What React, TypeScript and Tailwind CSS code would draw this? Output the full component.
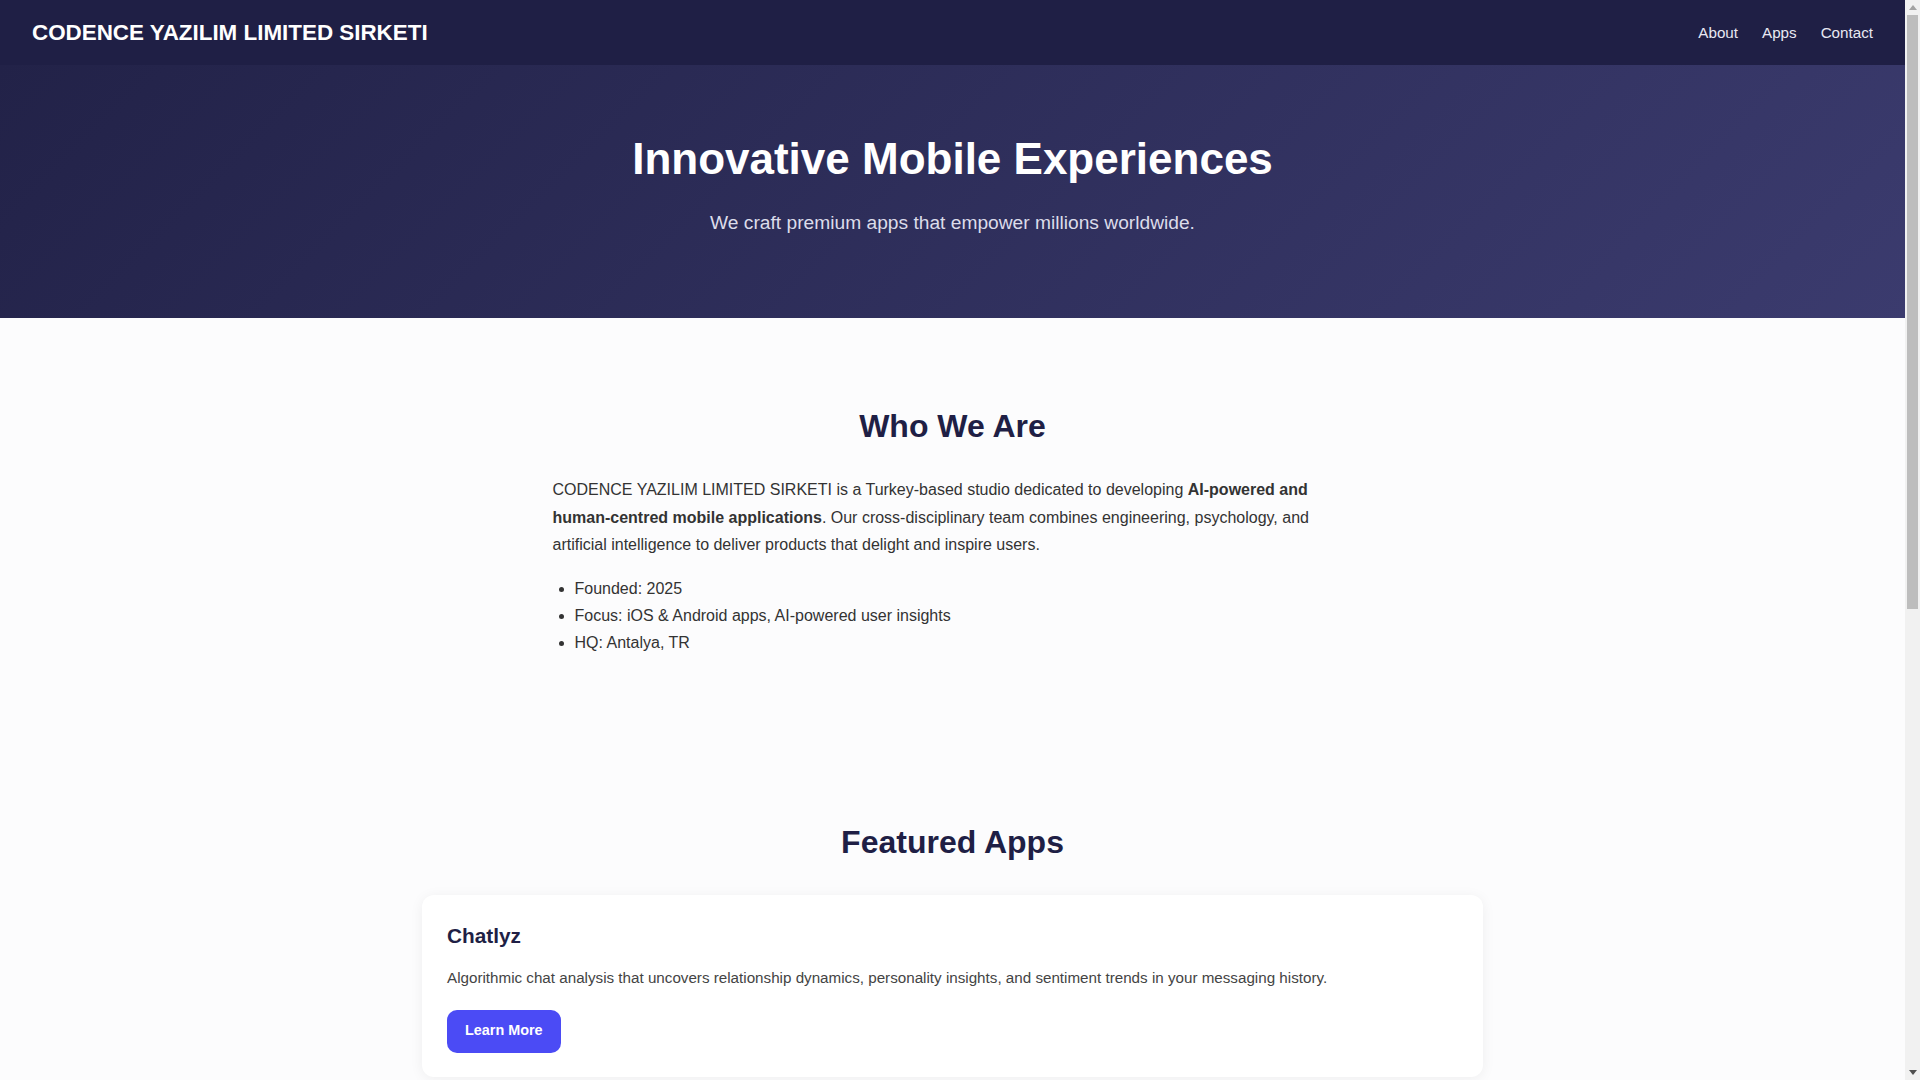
import React from "react";

function FakeScrollbar() {
  return (
    <div className="sticky top-0 h-screen w-[15px] shrink-0 bg-[#f1f1f1] flex flex-col items-center">
      <div className="h-[15px] w-full flex items-center justify-center">
        <svg width="8" height="5" viewBox="0 0 8 5"><path d="M0 5 L4 0 L8 5 Z" fill="#a3a3a3" /></svg>
      </div>
      <div className="w-[11px] h-[594px] bg-[#bdbdbd]" />
      <div className="flex-1" />
      <div className="h-[15px] w-full flex items-center justify-center">
        <svg width="8" height="5" viewBox="0 0 8 5"><path d="M0 0 L8 0 L4 5 Z" fill="#505050" /></svg>
      </div>
    </div>
  );
}

export default function App() {
  return (
    <div className="flex items-start bg-[#fcfcfd] text-[#333333] font-['Liberation_Sans',Arial,sans-serif]">
      <div className="flex-1 min-w-0">
        <header className="h-[65px] bg-[#1f1f45] px-8 pt-[2px] flex items-center justify-between">
          <div className="text-white font-bold text-[22.4px] leading-none">CODENCE YAZILIM LIMITED SIRKETI</div>
          <nav className="flex items-center gap-[24px] text-[15.2px] text-[#e8e8f2]">
            <a href="#about">About</a>
            <a href="#apps">Apps</a>
            <a href="#contact">Contact</a>
          </nav>
        </header>

        <section className="bg-[linear-gradient(135deg,#222248_0%,#3b3b6e_100%)] pt-[68px] pb-[79px] text-center">
          <h1 className="text-white font-bold text-[44px] leading-[52.8px] mb-[22.4px]">Innovative Mobile Experiences</h1>
          <p className="text-[#dcdcea] text-[19.2px] leading-[30.72px]">We craft premium apps that empower millions worldwide.</p>
        </section>

        <section id="about" className="pt-[89px] pb-[80px]">
          <div className="max-w-[800px] mx-auto">
            <h2 className="text-center text-[#1f1f45] font-bold text-[32px] leading-[38.4px] mb-[31px]">Who We Are</h2>
            <p className="text-[16px] leading-[27.5px]">
              CODENCE YAZILIM LIMITED SIRKETI is a Turkey-based studio dedicated to developing{" "}
              <strong className="font-bold">AI-powered and human-centred mobile applications</strong>. Our cross-disciplinary team
              combines engineering, psychology, and artificial intelligence to deliver products that delight and inspire users.
            </p>
            <ul className="mt-[16px] pl-[22px] list-disc text-[16px] leading-[27px]">
              <li>Founded: 2025</li>
              <li>Focus: iOS &amp; Android apps, AI-powered user insights</li>
              <li>HQ: Antalya, TR</li>
            </ul>
          </div>
        </section>

        <section id="apps" className="pt-[87.5px] pb-[80px]">
          <div className="max-w-[1061px] mx-auto">
            <h2 className="text-center text-[#1f1f45] font-bold text-[32px] leading-[38.4px] mb-[33.3px]">Featured Apps</h2>
            <div className="bg-white rounded-[12px] shadow-[0_2px_14px_rgba(0,0,0,0.06)] pt-[27px] pb-[24.6px] px-[25px]">
              <h3 className="text-[#1f1f45] font-bold text-[20.8px] leading-[27px] mb-[17px]">Chatlyz</h3>
              <p className="text-[#444444] text-[15.2px] leading-[24.3px] mb-[19.4px]">
                Algorithmic chat analysis that uncovers relationship dynamics, personality insights, and sentiment trends in your messaging history.
              </p>
              <a href="#" className="inline-flex items-center justify-center h-[43px] px-[18px] rounded-[10px] bg-[#4b4bf5] text-white font-bold text-[14.4px]">
                Learn More
              </a>
            </div>
          </div>
        </section>

        <section id="contact" className="pt-[80px] pb-[120px]">
          <div className="max-w-[800px] mx-auto text-center">
            <h2 className="text-[#1f1f45] font-bold text-[32px] leading-[38.4px] mb-[31px]">Contact</h2>
            <p className="text-[16px] leading-[27.5px]">Have a question or partnership idea? We would love to hear from you.</p>
            <p className="text-[16px] leading-[27.5px] mt-[12px]">info@codence.app</p>
            <p className="text-[16px] leading-[27.5px] mt-[4px]">Antalya, Türkiye</p>
          </div>
        </section>

        <footer className="bg-[#1f1f45] text-[#c8c8dc] text-center text-[14.4px] py-[28px]">
          © 2025 CODENCE YAZILIM LIMITED SIRKETI. All rights reserved.
        </footer>
      </div>
      <FakeScrollbar />
    </div>
  );
}
